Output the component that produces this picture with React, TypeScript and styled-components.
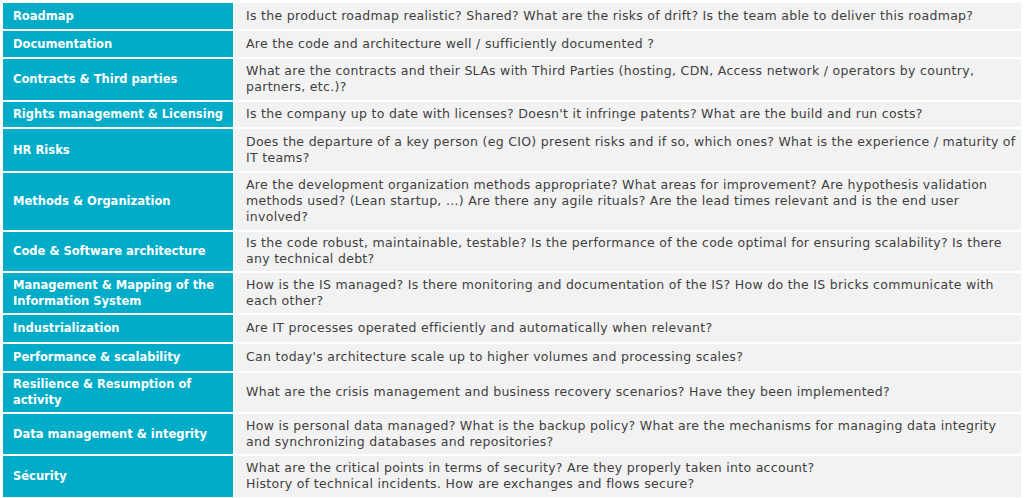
import React from "react";
import styled, { createGlobalStyle } from "styled-components";

const GlobalStyle = createGlobalStyle`
  body {
    margin: 0;
    background: #ffffff;
  }
`;

type Item = {
    topic: string[];
    questions: string[];
    h: number;
};

const items: Item[] = [
    {
        topic: ["Roadmap"],
        questions: ["Is the product roadmap realistic? Shared? What are the risks of drift? Is the team able to deliver this roadmap?"],
        h: 26,
    },
    {
        topic: ["Documentation"],
        questions: ["Are the code and architecture well / sufficiently documented ?"],
        h: 26,
    },
    {
        topic: ["Contracts & Third parties"],
        questions: [
            "What are the contracts and their SLAs with Third Parties (hosting, CDN, Access network / operators by country,",
            "partners, etc.)?",
        ],
        h: 41,
    },
    {
        topic: ["Rights management & Licensing"],
        questions: ["Is the company up to date with licenses? Doesn't it infringe patents? What are the build and run costs?"],
        h: 25,
    },
    {
        topic: ["HR Risks"],
        questions: [
            "Does the departure of a key person (eg CIO) present risks and if so, which ones? What is the experience / maturity of",
            "IT teams?",
        ],
        h: 42,
    },
    {
        topic: ["Methods & Organization"],
        questions: [
            "Are the development organization methods appropriate? What areas for improvement? Are hypothesis validation",
            "methods used? (Lean startup, ...) Are there any agile rituals? Are the lead times relevant and is the end user",
            "involved?",
        ],
        h: 57,
    },
    {
        topic: ["Code & Software architecture"],
        questions: [
            "Is the code robust, maintainable, testable? Is the performance of the code optimal for ensuring scalability? Is there",
            "any technical debt?",
        ],
        h: 39,
    },
    {
        topic: ["Management & Mapping of the", "Information System"],
        questions: [
            "How is the IS managed? Is there monitoring and documentation of the IS? How do the IS bricks communicate with",
            "each other?",
        ],
        h: 40,
    },
    {
        topic: ["Industrialization"],
        questions: ["Are IT processes operated efficiently and automatically when relevant?"],
        h: 27,
    },
    {
        topic: ["Performance & scalability"],
        questions: ["Can today's architecture scale up to higher volumes and processing scales?"],
        h: 27,
    },
    {
        topic: ["Resilience & Resumption of", "activity"],
        questions: ["What are the crisis management and business recovery scenarios? Have they been implemented?"],
        h: 39,
    },
    {
        topic: ["Data management & integrity"],
        questions: [
            "How is personal data managed? What is the backup policy? What are the mechanisms for managing data integrity",
            "and synchronizing databases and repositories?",
        ],
        h: 40,
    },
    {
        topic: ["Sécurity"],
        questions: [
            "What are the critical points in terms of security? Are they properly taken into account?",
            "History of technical incidents. How are exchanges and flows secure?",
        ],
        h: 41,
    },
];

const App = () => {
    return (
        <>
            <GlobalStyle />
            <Page>
                <Table>
                    {items.map((item) => (
                        <React.Fragment key={item.topic.join(" ")}>
                            <TopicCell $h={item.h}>
                                {item.topic.map((line) => (
                                    <Line key={line}>{line}</Line>
                                ))}
                            </TopicCell>
                            <QuestionCell $h={item.h}>
                                {item.questions.map((line) => (
                                    <Line key={line}>{line}</Line>
                                ))}
                            </QuestionCell>
                        </React.Fragment>
                    ))}
                </Table>
            </Page>
        </>
    );
};

const Page = styled.div`
  width: 1024px;
  padding: 3px 3px 0 3px;
  box-sizing: border-box;
`;

const Table = styled.div`
  display: grid;
  grid-template-columns: 230px minmax(0, 1fr);
  column-gap: 2px;
  row-gap: 2px;
`;

const Cell = styled.div<{ $h: number }>`
  height: ${(p) => p.$h}px;
  display: flex;
  flex-direction: column;
  justify-content: center;
  box-sizing: border-box;
  font-family: "DejaVu Sans", sans-serif;
  line-height: 16px;
  white-space: nowrap;
  overflow: hidden;
`;

const TopicCell = styled(Cell)`
  background-color: #00acc8;
  color: #ffffff;
  font-weight: bold;
  font-size: 11.5px;
  padding: 0 0 1px 10px;
`;

const QuestionCell = styled(Cell)`
  background-color: #f2f2f2;
  color: #404040;
  font-size: 12.5px;
  letter-spacing: 0.3px;
  padding: 0 0 1px 11px;
`;

const Line = styled.span`
  display: block;
`;

export default App;
